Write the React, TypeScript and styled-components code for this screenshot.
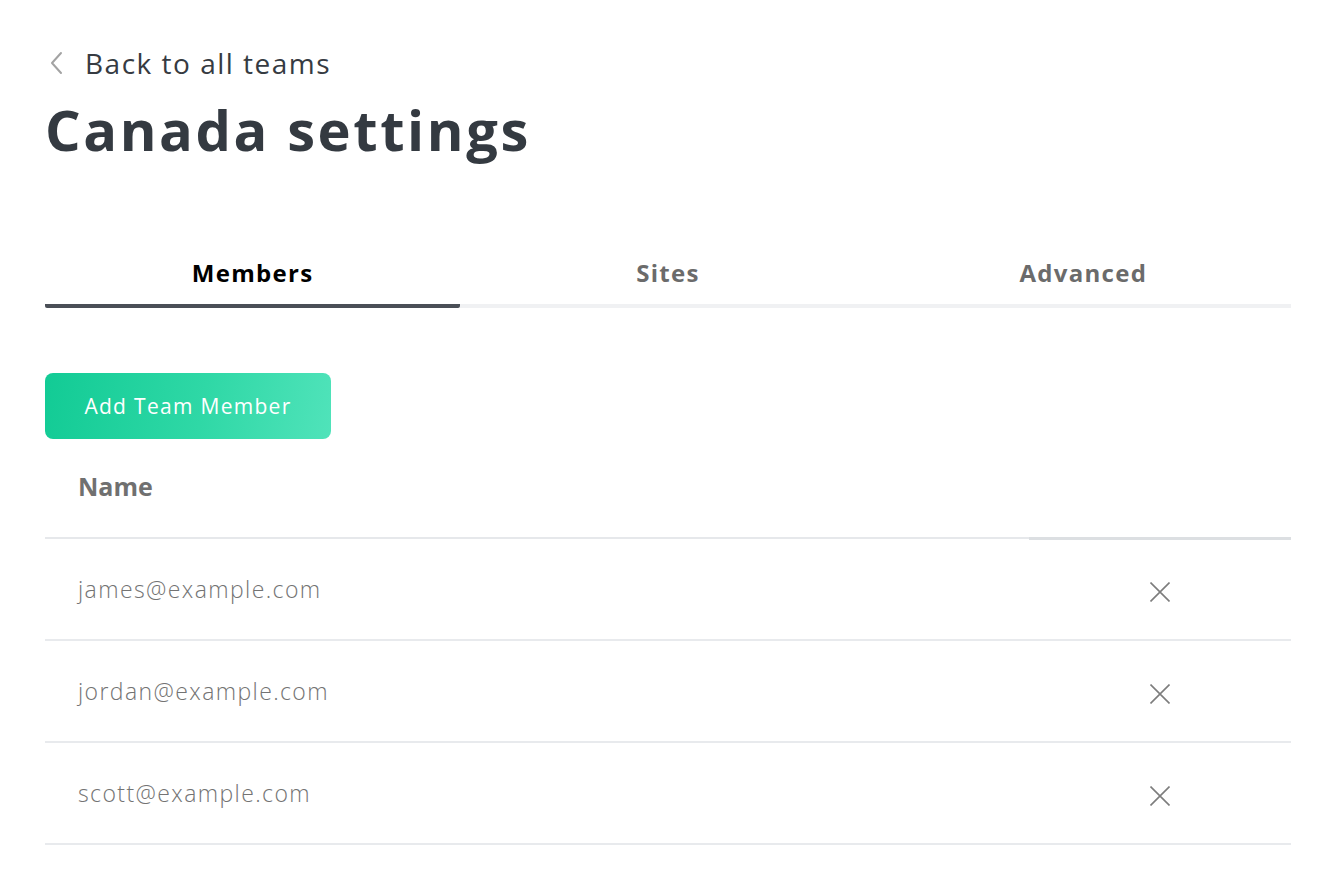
import React from "react";
import styled, { createGlobalStyle } from "styled-components";

const GlobalStyle = createGlobalStyle`
  html, body { margin: 0; padding: 0; background: #ffffff; }
  body { font-family: "Open Sans", Lato, sans-serif; -webkit-font-smoothing: antialiased; }
  * { box-sizing: border-box; }
`;

const Page = styled.div`
  width: 1246px;
  margin-left: 45px;
  padding-top: 43px;
`;

const BackLink = styled.a`
  display: flex;
  align-items: center;
  gap: 22px;
  height: 40px;
  padding-left: 4px;
  color: #363b42;
  font-size: 28px;
  font-weight: 400;
  text-decoration: none;
  letter-spacing: 1.5px;
  cursor: pointer;
`;

const Title = styled.h1`
  margin: 10px 0 0 0;
  font-size: 56px;
  font-weight: 700;
  color: #343a41;
  line-height: 72px;
  letter-spacing: 2.6px;
`;

const Tabs = styled.div`
  display: grid;
  grid-template-columns: repeat(3, 1fr);
  margin-top: 90px;
`;

const Tab = styled.button<{ $active?: boolean }>`
  border: none;
  background: none;
  padding: 3px 0 16px 0;
  font-family: inherit;
  font-size: 24px;
  font-weight: 700;
  letter-spacing: 1.3px;
  color: ${(p) => (p.$active ? "#000000" : "#6b6b6b")};
  border-bottom: 4px solid ${(p) => (p.$active ? "#4a4f57" : "#f0f1f3")};
  border-radius: ${(p) => (p.$active ? "2px" : "0")};
  line-height: 30px;
  cursor: pointer;
`;

const AddButton = styled.button`
  margin-top: 65px;
  width: 286px;
  height: 66px;
  border: none;
  border-radius: 8px;
  background: linear-gradient(100deg, #12cb95 0%, #2fd8a6 55%, #50e3ba 100%);
  color: #ffffff;
  font-family: inherit;
  font-size: 21px;
  font-weight: 400;
  letter-spacing: 1.3px;
  cursor: pointer;
`;

const Table = styled.table`
  width: 100%;
  border-collapse: collapse;
`;

const HeadCell = styled.th<{ $action?: boolean }>`
  text-align: left;
  height: 99px;
  padding: 0 0 4px 33px;
  font-size: 25px;
  font-weight: 700;
  color: #707070;
  letter-spacing: 0px;
  vertical-align: middle;
  border-bottom: ${(p) => (p.$action ? "3px solid #dcdfe2" : "2px solid #e6e8eb")};
  width: ${(p) => (p.$action ? "262px" : "auto")};
`;

const Cell = styled.td<{ $action?: boolean }>`
  height: 102px;
  padding: 0 0 0 ${(p) => (p.$action ? "0" : "33px")};
  text-align: ${(p) => (p.$action ? "center" : "left")};
  font-size: 23px;
  font-weight: 300;
  color: #737373;
  letter-spacing: 1.4px;
  border-bottom: 2px solid #e8eaed;
  vertical-align: middle;
`;

const RemoveButton = styled.button`
  border: none;
  background: none;
  padding: 0;
  display: inline-flex;
  vertical-align: middle;
  cursor: pointer;
`;

const Chevron = () => (
  <svg width="14" height="24" viewBox="0 0 14 24" fill="none">
    <path d="M12 2 L3 12 L12 22" stroke="#a3a3a3" strokeWidth="2" strokeLinecap="round" strokeLinejoin="round" />
  </svg>
);

const CloseIcon = () => (
  <svg width="20" height="20" viewBox="0 0 20 20" fill="none">
    <path d="M0.5 0.5 L19.5 19.5 M19.5 0.5 L0.5 19.5" stroke="#7d7d7d" strokeWidth="1.6" />
  </svg>
);

const members = ["james@example.com", "jordan@example.com", "scott@example.com"];

export default function App() {
  return (
    <>
      <GlobalStyle />
      <Page>
        <BackLink>
          <Chevron />
          Back to all teams
        </BackLink>
        <Title>Canada settings</Title>
        <Tabs>
          <Tab $active>Members</Tab>
          <Tab>Sites</Tab>
          <Tab>Advanced</Tab>
        </Tabs>
        <AddButton>Add Team Member</AddButton>
        <Table>
          <thead>
            <tr>
              <HeadCell>Name</HeadCell>
              <HeadCell $action />
            </tr>
          </thead>
          <tbody>
            {members.map((m) => (
              <tr key={m}>
                <Cell>{m}</Cell>
                <Cell $action>
                  <RemoveButton aria-label={`Remove ${m}`}>
                    <CloseIcon />
                  </RemoveButton>
                </Cell>
              </tr>
            ))}
          </tbody>
        </Table>
      </Page>
    </>
  );
}
